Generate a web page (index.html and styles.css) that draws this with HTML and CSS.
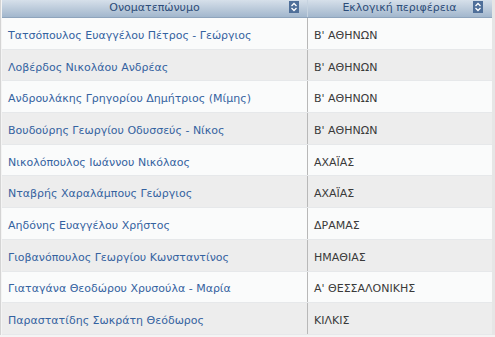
FILE: index.html
```html
<!DOCTYPE html>
<html lang="el">
<head>
<meta charset="utf-8">
<link rel="stylesheet" href="styles.css">
</head>
<body>
<div class="grid">
  <div class="head">
    <div class="hcell c1"><span class="htext">Ονοματεπώνυμο</span><span class="sort"><svg width="10" height="12" viewBox="0 0 10 12"><path d="M2.5 5 L5 2.5 L7.5 5 M2.5 7 L5 9.5 L7.5 7" fill="none" stroke="#fff" stroke-width="1.3"/></svg></span></div>
    <div class="hcell c2"><span class="htext">Εκλογική περιφέρεια</span><span class="sort"><svg width="10" height="12" viewBox="0 0 10 12"><path d="M2.5 5 L5 2.5 L7.5 5 M2.5 7 L5 9.5 L7.5 7" fill="none" stroke="#fff" stroke-width="1.3"/></svg></span></div>
  </div>
  <div class="row odd"><div class="cell c1 name">Τατσόπουλος Ευαγγέλου Πέτρος - Γεώργιος</div><div class="cell c2">Β' ΑΘΗΝΩΝ</div></div>
  <div class="row even"><div class="cell c1 name">Λοβέρδος Νικολάου Ανδρέας</div><div class="cell c2">Β' ΑΘΗΝΩΝ</div></div>
  <div class="row odd"><div class="cell c1 name">Ανδρουλάκης Γρηγορίου Δημήτριος (Μίμης)</div><div class="cell c2">Β' ΑΘΗΝΩΝ</div></div>
  <div class="row even"><div class="cell c1 name">Βουδούρης Γεωργίου Οδυσσεύς - Νίκος</div><div class="cell c2">Β' ΑΘΗΝΩΝ</div></div>
  <div class="row odd"><div class="cell c1 name">Νικολόπουλος Ιωάννου Νικόλαος</div><div class="cell c2">ΑΧΑΪΑΣ</div></div>
  <div class="row even"><div class="cell c1 name">Νταβρής Χαραλάμπους Γεώργιος</div><div class="cell c2">ΑΧΑΪΑΣ</div></div>
  <div class="row odd"><div class="cell c1 name">Αηδόνης Ευαγγέλου Χρήστος</div><div class="cell c2">ΔΡΑΜΑΣ</div></div>
  <div class="row even"><div class="cell c1 name">Γιοβανόπουλος Γεωργίου Κωνσταντίνος</div><div class="cell c2">ΗΜΑΘΙΑΣ</div></div>
  <div class="row odd"><div class="cell c1 name">Γιαταγάνα Θεοδώρου Χρυσούλα - Μαρία</div><div class="cell c2">Α' ΘΕΣΣΑΛΟΝΙΚΗΣ</div></div>
  <div class="row even"><div class="cell c1 name">Παραστατίδης Σωκράτη Θεόδωρος</div><div class="cell c2">ΚΙΛΚΙΣ</div></div>
</div>
</body>
</html>
```
FILE: styles.css
```css
html, body {
  margin: 0;
  padding: 0;
  background: #f4f4f4;
}
body {
  font-family: "DejaVu Sans", Verdana, sans-serif;
  font-size: 11px;
  width: 495px;
  height: 337px;
  overflow: hidden;
}
.grid {
  width: 495px;
  border-left: 1px solid #d4d4d4;
  box-sizing: border-box;
  padding-left: 1px;
  border-right: 3px solid #e6e6e6;
}
.head {
  display: flex;
  height: 18px;
  background: linear-gradient(#d6e0ea, #bccbdb 50%, #a2b7cd);
  border-bottom: 1px solid #8ea4bc;
  box-sizing: border-box;
}
.hcell {
  position: relative;
  display: flex;
  align-items: center;
  justify-content: center;
  color: #2c4c78;
  font-size: 11px;
  box-sizing: border-box;
}
.hcell.c1 {
  border-right: 1px solid #c6d3e0;
}
.htext {
  line-height: 16px;
  margin-top: -1px;
}
.sort {
  position: absolute;
  right: 8px;
  top: 1px;
  width: 10px;
  height: 12px;
  background: #4f6f99;
  display: block;
}
.sort svg { display: block; }
.c1 { width: 306px; }
.c2 { width: 183px; }
.row {
  display: flex;
  height: 31.7px;
  box-sizing: border-box;
  border-bottom: 1px solid #e6e8ea;
}
.row.odd { background: #fafbfb; }
.row.even { background: #ededed; }
.cell {
  display: flex;
  align-items: center;
  padding-left: 6px;
  padding-top: 4px;
  box-sizing: border-box;
  white-space: nowrap;
  color: #3a3a3a;
}
.cell.c1 {
  border-right: 1px solid #b8b8b8;
}
.cell.name {
  color: #3462a0;
}
```
